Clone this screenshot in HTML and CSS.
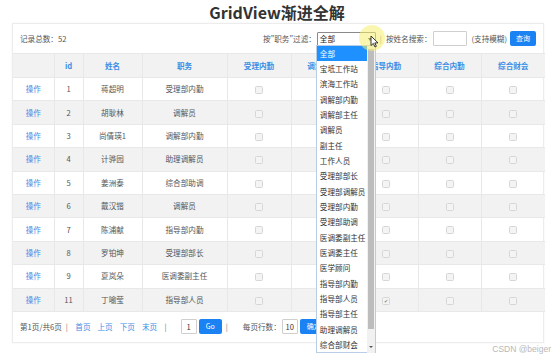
FILE: index.html
```html
<!DOCTYPE html>
<html lang="zh-CN">
<head>
  <meta charset="UTF-8">
  <title>GridView渐进全解</title>
  <link rel="stylesheet" href="styles.css">
</head>
<body>
  <h1 class="title">GridView渐进全解</h1>

  <div class="panel">
    <div class="toolbar">
      <span class="total">记录总数：52</span>
      <div class="filters">
        <span>按"职务"过滤：</span>
        <div class="select-wrap">
          <div class="select">全部<span class="arrow"></span></div>
          <ul class="options">
            <li class="active">全部</li>
            <li>宝坻工作站</li>
            <li>滨海工作站</li>
            <li>调解部内勤</li>
            <li>调解部主任</li>
            <li>调解员</li>
            <li>副主任</li>
            <li>工作人员</li>
            <li>受理部部长</li>
            <li>受理部调解员</li>
            <li>受理部内勤</li>
            <li>受理部助调</li>
            <li>医调委副主任</li>
            <li>医调委主任</li>
            <li>医学顾问</li>
            <li>指导部内勤</li>
            <li>指导部人员</li>
            <li>指导部主任</li>
            <li>助理调解员</li>
            <li>综合部财会</li>
          </ul>
          <div class="scrollbar">
            <div class="thumb"></div>
            <span class="down"></span>
          </div>
          <span class="glow"></span>
          <svg class="pointer" width="9" height="13" viewBox="0 0 9 13">
            <path d="M1 1 L1 10.5 L3.3 8.4 L5 12 L6.4 11.3 L4.8 7.9 L8 7.9 Z" fill="#fff" stroke="#222" stroke-width="0.9" stroke-linejoin="round"/>
          </svg>
        </div>
        <span class="sep">|</span>
        <span>按姓名搜索：</span>
        <span class="field search"></span>
        <span>(支持模糊)</span>
        <button class="btn">查询</button>
      </div>
    </div>

    <table class="grid">
      <colgroup>
        <col style="width:41px"><col style="width:29px"><col style="width:59px"><col style="width:85px">
        <col style="width:64px"><col style="width:63px"><col style="width:64px"><col style="width:63px"><col style="width:64px">
      </colgroup>
      <thead>
        <tr>
          <th></th><th>id</th><th>姓名</th><th>职务</th><th>受理内勤</th><th>调解内勤</th><th>指导内勤</th><th>综合内勤</th><th>综合财会</th>
        </tr>
      </thead>
      <tbody>
        <tr><td><a href="#">操作</a></td><td>1</td><td>蒋超明</td><td>受理部内勤</td><td><i class="cb"></i></td><td><i class="cb"></i></td><td><i class="cb"></i></td><td><i class="cb"></i></td><td><i class="cb"></i></td></tr>
        <tr><td><a href="#">操作</a></td><td>2</td><td>胡耿林</td><td>调解员</td><td><i class="cb"></i></td><td><i class="cb"></i></td><td><i class="cb"></i></td><td><i class="cb"></i></td><td><i class="cb"></i></td></tr>
        <tr><td><a href="#">操作</a></td><td>3</td><td>尚倩瑛1</td><td>调解部内勤</td><td><i class="cb"></i></td><td><i class="cb"></i></td><td><i class="cb"></i></td><td><i class="cb"></i></td><td><i class="cb"></i></td></tr>
        <tr><td><a href="#">操作</a></td><td>4</td><td>计骅园</td><td>助理调解员</td><td><i class="cb"></i></td><td><i class="cb"></i></td><td><i class="cb"></i></td><td><i class="cb"></i></td><td><i class="cb"></i></td></tr>
        <tr><td><a href="#">操作</a></td><td>5</td><td>姜洲泰</td><td>综合部助调</td><td><i class="cb"></i></td><td><i class="cb"></i></td><td><i class="cb"></i></td><td><i class="cb"></i></td><td><i class="cb"></i></td></tr>
        <tr><td><a href="#">操作</a></td><td>6</td><td>戴汉锴</td><td>调解员</td><td><i class="cb"></i></td><td><i class="cb"></i></td><td><i class="cb"></i></td><td><i class="cb"></i></td><td><i class="cb"></i></td></tr>
        <tr><td><a href="#">操作</a></td><td>7</td><td>陈浦献</td><td>指导部内勤</td><td><i class="cb"></i></td><td><i class="cb"></i></td><td><i class="cb"></i></td><td><i class="cb"></i></td><td><i class="cb"></i></td></tr>
        <tr><td><a href="#">操作</a></td><td>8</td><td>罗铂坤</td><td>受理部部长</td><td><i class="cb"></i></td><td><i class="cb"></i></td><td><i class="cb"></i></td><td><i class="cb"></i></td><td><i class="cb"></i></td></tr>
        <tr><td><a href="#">操作</a></td><td>9</td><td>夏岚朵</td><td>医调委副主任</td><td><i class="cb"></i></td><td><i class="cb"></i></td><td><i class="cb"></i></td><td><i class="cb"></i></td><td><i class="cb"></i></td></tr>
        <tr><td><a href="#">操作</a></td><td>11</td><td>丁喻莹</td><td>指导部人员</td><td><i class="cb"></i></td><td><i class="cb"></i></td><td><i class="cb checked">✔</i></td><td><i class="cb"></i></td><td><i class="cb"></i></td></tr>
      </tbody>
    </table>

    <div class="pager">
      <span>第1页/共6页</span>
      <span class="sep">|</span>
      <a href="#">首页</a>
      <a href="#">上页</a>
      <a href="#">下页</a>
      <a href="#">末页</a>
      <span class="sep">|</span>
      <span class="field page-no first">1</span>
      <button class="btn go">Go</button>
      <span class="sep">|</span>
      <span class="rows-label">每页行数：</span>
      <span class="field page-no">10</span>
      <button class="btn go">确定</button>
    </div>
  </div>

  <div class="watermark">CSDN @beiger</div>
</body>
</html>
```

FILE: styles.css
```css
body {
  margin: 0;
  font-family: "Noto Sans CJK SC", "Noto Sans", sans-serif;
  font-size: 7.6px;
  color: #555;
  background-color: #fff;
  position: relative;
  width: 554px;
  height: 358px;
  overflow: hidden;
}

.title {
  margin: 0;
  height: 23px;
  line-height: 25px;
  text-align: center;
  font-size: 16px;
  font-weight: bold;
  color: #333;
}

.panel {
  width: 530px;
  margin-left: 12px;
  border: 1px solid #ececec;
  box-shadow: 0 0 2px rgba(0, 0, 0, 0.06);
}

.toolbar {
  height: 29px;
  display: flex;
  align-items: center;
  justify-content: space-between;
  padding: 0 7px;
}

.filters {
  display: flex;
  align-items: center;
}

.select-wrap {
  position: relative;
  margin-left: 1px;
}

.select {
  width: 55px;
  height: 12px;
  border: 1px solid #8a8a8a;
  border-radius: 1px;
  padding-left: 2px;
  line-height: 12px;
  color: #222;
  position: relative;
}

.arrow {
  position: absolute;
  right: 3px;
  top: 5px;
  border-left: 2.5px solid transparent;
  border-right: 2.5px solid transparent;
  border-top: 3px solid #333;
}

.options {
  position: absolute;
  top: 13px;
  left: -1px;
  width: 58px;
  margin: 0;
  padding: 0;
  list-style: none;
  background-color: #fff;
  border: 1px solid #b9cde6;
  z-index: 5;
}

.options li {
  height: 15.35px;
  line-height: 15.35px;
  padding-left: 3px;
  color: #333;
}

.options li.active {
  background-color: #1e90ff;
  color: #fff;
  margin-right: 8px;
}

.scrollbar {
  position: absolute;
  top: 14px;
  left: 50px;
  width: 8px;
  height: 307px;
  background-color: #f1f1f1;
  z-index: 6;
}

.thumb {
  margin: 3px 1px 0;
  height: 280px;
  background-color: #bdbdbd;
}

.down {
  position: absolute;
  left: 2px;
  bottom: 5px;
  border-left: 2px solid transparent;
  border-right: 2px solid transparent;
  border-top: 2.5px solid #555;
}

.glow {
  position: absolute;
  left: 42px;
  top: -7px;
  width: 26px;
  height: 26px;
  border-radius: 50%;
  background-color: rgba(246, 238, 110, 0.55);
  z-index: 7;
}

.pointer {
  position: absolute;
  left: 53px;
  top: 3px;
  z-index: 8;
}

.sep {
  margin: 0 4px;
  color: #777;
}

.field {
  display: inline-block;
  height: 13px;
  border: 1px solid #cfcfcf;
  border-radius: 1px;
  background-color: #fff;
  line-height: 13px;
  text-align: center;
  color: #333;
}

.search {
  width: 32px;
  margin: 0 4px 0 2px;
}

.btn {
  height: 15px;
  padding: 0 6px;
  margin-left: 3px;
  border: none;
  border-radius: 2px;
  background-color: #1a82f2;
  color: #fff;
  font-family: inherit;
  font-size: 7px;
  line-height: 15px;
}

.grid {
  width: 530px;
  border-collapse: collapse;
  table-layout: fixed;
}

.grid th, .grid td {
  padding: 0;
  border: 1px solid #e8e8e8;
  text-align: center;
  height: 22.4px;
  line-height: 10px;
}

.grid tr > :first-child { border-left: none; }
.grid tr > :last-child { border-right: none; }

.grid th {
  height: 23px;
  background-color: #f2f2f2;
  color: #3a8ee6;
  font-weight: bold;
}

.grid tbody tr:nth-child(even) {
  background-color: #f2f2f2;
}

.grid a, .pager a {
  color: #3a8ee6;
  text-decoration: none;
}

.cb {
  display: inline-block;
  width: 6px;
  height: 6px;
  border: 1px solid #d6d6d6;
  border-radius: 1.5px;
  background-color: #f4f4f4;
  vertical-align: middle;
  font-style: normal;
  font-size: 5px;
  line-height: 6px;
  color: #888;
}

.pager {
  height: 30px;
  display: flex;
  align-items: center;
  padding: 0 7px;
}

.pager a {
  margin: 0 3.5px;
}

.pager .sep {
  margin: 0 4px;
}

.page-no {
  width: 14px;
  margin-left: 1px;
}

.page-no.first {
  margin-left: 10px;
}

.rows-label {
  margin-left: 11px;
}

.pager .go {
  padding: 0 7px;
  margin-left: 2px;
}

.watermark {
  position: absolute;
  right: 3px;
  bottom: 4px;
  font-family: "Liberation Sans", sans-serif;
  font-size: 8.5px;
  color: #b8b8b8;
}
```
